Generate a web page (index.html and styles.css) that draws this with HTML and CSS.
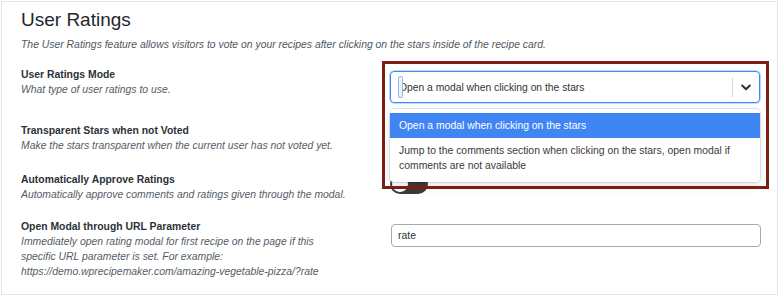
FILE: index.html
```html
<!DOCTYPE html>
<html lang="en">
<head>
<meta charset="utf-8">
<title>User Ratings</title>
<link rel="stylesheet" href="styles.css">
</head>
<body>
<div class="panel">
  <h2 class="title">User Ratings</h2>
  <p class="intro">The User Ratings feature allows visitors to vote on your recipes after clicking on the stars inside of the recipe card.</p>
  <div class="settings">
    <div class="row row-mode">
      <div class="info">
        <div class="label">User Ratings Mode</div>
        <div class="desc">What type of user ratings to use.</div>
      </div>
      <div class="control">
        <div class="select">
          <span class="caret"></span>
          <span class="value">Open a modal when clicking on the stars</span>
          <span class="sep"></span>
          <span class="chev"><svg width="10" height="7" viewBox="0 0 10 7"><path d="M1.2 1.5l3.8 3.8 3.8-3.8" fill="none" stroke="#333" stroke-width="2" stroke-linecap="round" stroke-linejoin="round"/></svg></span>
        </div>
        <div class="menu">
          <div class="option option-active">Open a modal when clicking on the stars</div>
          <div class="option">Jump to the comments section when clicking on the stars, open modal if comments are not available</div>
        </div>
      </div>
    </div>
    <div class="row row-stars">
      <div class="info">
        <div class="label">Transparent Stars when not Voted</div>
        <div class="desc">Make the stars transparent when the current user has not voted yet.</div>
      </div>
      <div class="control">
        <span class="toggle"><span class="knob"></span></span>
      </div>
    </div>
    <div class="row row-approve">
      <div class="info">
        <div class="label">Automatically Approve Ratings</div>
        <div class="desc">Automatically approve comments and ratings given through the modal.</div>
      </div>
      <div class="control">
        <span class="toggle"><span class="knob"></span></span>
      </div>
    </div>
    <div class="row row-url">
      <div class="info">
        <div class="label">Open Modal through URL Parameter</div>
        <div class="desc">Immediately open rating modal for first recipe on the page if this<br>specific URL parameter is set. For example:<br>https://demo.wprecipemaker.com/amazing-vegetable-pizza/?rate</div>
      </div>
      <div class="control">
        <div class="text-input">rate</div>
      </div>
    </div>
  </div>
  <div class="annotation"></div>
</div>
</body>
</html>
```

FILE: styles.css
```css
html, body {
  margin: 0;
  padding: 0;
  background: #ffffff;
}
body {
  font-family: "Liberation Sans", Arial, sans-serif;
  color: #1d2327;
}
.panel {
  position: relative;
  box-sizing: border-box;
  margin: 1px 0 0 1px;
  width: 777px;
  height: 294px;
  border: 1px solid #e4e6e9;
  padding: 8px 15px 0 19px;
  background: #fff;
}
.title {
  margin: 0;
  font-size: 19px;
  line-height: 19px;
  font-weight: 400;
  color: #23282d;
}
.intro {
  margin: 8px 0 0 0;
  font-size: 10.4px;
  line-height: 15px;
  font-style: italic;
  color: #50575e;
}
.settings {
  margin-top: 15px;
}
.row {
  display: grid;
  grid-template-columns: 369px 371px;
  align-items: start;
}
.row-mode { height: 56px; }
.row-stars { height: 49px; }
.row-approve { height: 47px; }
.label {
  font-size: 10.4px;
  line-height: 15px;
  font-weight: 700;
  color: #2c3338;
}
.desc {
  font-size: 10.4px;
  line-height: 15px;
  font-style: italic;
  color: #555d66;
}
.control {
  position: relative;
}
.select {
  position: relative;
  box-sizing: border-box;
  margin-top: 4px;
  width: 370px;
  height: 32px;
  border: 1px solid #3f88f5;
  box-shadow: 0 0 0 0.6px rgba(63, 136, 245, 0.6);
  border-radius: 4px;
  display: flex;
  align-items: center;
  padding-left: 8px;
  font-size: 10.3px;
  color: #333;
}
.caret {
  position: absolute;
  left: 7px;
  top: 4px;
  width: 3px;
  height: 20px;
  border: 1px solid #8fb6ef;
  border-radius: 2px;
  background: #eef4fd;
}
.value {
  flex: 1;
}
.sep {
  width: 1px;
  height: 19px;
  background: #d4d4d4;
}
.chev {
  width: 26px;
  display: flex;
  justify-content: center;
  align-items: center;
  padding-top: 1px;
}
.menu {
  position: absolute;
  z-index: 5;
  left: 0;
  top: 42px;
  width: 370px;
  box-sizing: border-box;
  padding: 4px 0 4px;
  background: #fff;
  border-radius: 4px;
  box-shadow: 0 0 0 1px rgba(0, 0, 0, 0.1), 0 4px 11px rgba(0, 0, 0, 0.1);
  font-size: 10.4px;
  color: #3a3a3a;
}
.option {
  padding: 5px 9px 5px 9px;
  line-height: 15px;
}
.option-active {
  background: #3f86f4;
  color: #fff;
}
.toggle {
  display: inline-block;
  position: relative;
  margin-top: 2px;
  width: 38px;
  height: 20px;
  border-radius: 10px;
  background: #3a3a3a;
}
.knob {
  position: absolute;
  left: 1px;
  top: 1px;
  width: 16px;
  height: 16px;
  border-radius: 50%;
  background: #fff;
  border: 1px solid #3a3a3a;
}
.text-input {
  box-sizing: border-box;
  margin: 5px 0 0 1px;
  width: 370px;
  height: 23px;
  border: 1px solid #a7aaad;
  border-radius: 4px;
  padding-left: 6px;
  font-size: 10.4px;
  line-height: 21px;
  color: #2c3338;
}
.annotation {
  position: absolute;
  z-index: 10;
  left: 380px;
  top: 59px;
  width: 387px;
  height: 128px;
  box-sizing: border-box;
  border: 3px solid #7c1e13;
  pointer-events: none;
}
```
